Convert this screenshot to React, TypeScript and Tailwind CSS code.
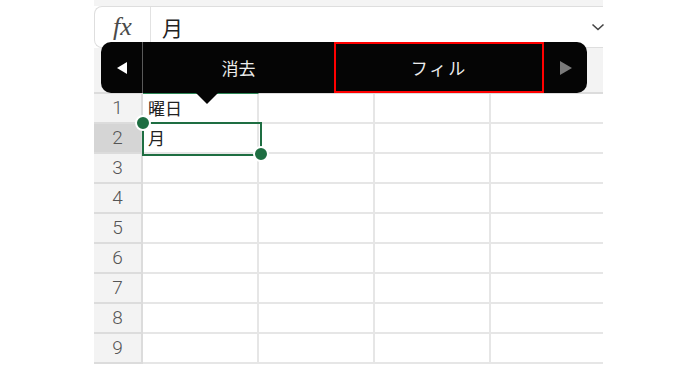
import React from "react";

const rows = [1, 2, 3, 4, 5, 6, 7, 8, 9];

export default function App() {
  return (
    <div
      className="relative w-[698px] h-[365px] bg-white overflow-hidden"
      style={{ fontFamily: '"Noto Sans", "Noto Sans CJK JP", sans-serif' }}
    >
      <div className="ml-[94px] w-[509px] flex flex-col">
        <div className="h-[6px] bg-[#f4f4f4]" />
        {/* formula bar */}
        <div className="h-[42px] flex items-center bg-white border border-r-0 border-[#dedede] rounded-l-[8px]">
          <div className="w-[56px] h-full flex items-center justify-center border-r border-[#e2e2e2]">
            <span
              className="italic text-[26px] text-[#4a4a4a] leading-none"
              style={{ fontFamily: '"Liberation Serif", "DejaVu Serif", serif' }}
            >
              fx
            </span>
          </div>
          <div className="flex-1 pl-[11px] text-[21px] text-[#222] leading-none" style={{ fontFamily: '"Noto Sans CJK JP", sans-serif' }}>
            月
          </div>
          <svg width="14" height="10" viewBox="0 0 14 10" className="mr-[-2px]">
            <polyline points="1.5,2.5 7,7.5 12.5,2.5" fill="none" stroke="#444" strokeWidth="1.6" />
          </svg>
        </div>
        {/* column header */}
        <div className="h-[46px] flex bg-[#f3f3f3]">
          <div className="w-[49px] border-r-2 border-b-2 border-[#dcdcdc]" />
          <div className="w-[116px] border-r-2 border-[#dcdcdc] border-b-2 border-b-[#2d8656]" />
          <div className="w-[116px] border-r-2 border-b-2 border-[#dcdcdc]" />
          <div className="w-[116px] border-r-2 border-b-2 border-[#dcdcdc]" />
          <div className="flex-1 border-b-2 border-[#dcdcdc]" />
        </div>
        {rows.map((r) => (
          <div key={r} className="h-[30px] flex">
            <div
              className={`w-[49px] border-r-2 border-b-2 border-[#dcdcdc] flex items-center justify-center text-[19px] font-light text-[#555] ${
                r === 2 ? "bg-[#d5d5d5]" : "bg-[#f3f3f3]"
              }`}
              style={{ fontFamily: 'Roboto, "Noto Sans", sans-serif' }}
            >
              {r}
            </div>
            <div className="w-[116px] border-r-2 border-b-2 border-[#e6e6e6] flex items-center pl-[5px] text-[17px] text-[#222]" style={{ fontFamily: '"Noto Sans CJK JP", sans-serif' }}>
              {r === 1 ? "曜日" : r === 2 ? "月" : ""}
            </div>
            <div className="w-[116px] border-r-2 border-b-2 border-[#e6e6e6]" />
            <div className="w-[116px] border-r-2 border-b-2 border-[#e6e6e6]" />
            <div className="flex-1 border-b-2 border-[#e6e6e6]" />
          </div>
        ))}
      </div>

      {/* selection */}
      <div className="absolute left-[142px] top-[122px] w-[120px] h-[34px] border-2 border-[#1e6e42]" />
      <div className="absolute left-[135px] top-[115px] w-[16px] h-[16px] rounded-full bg-[#1e6e42] border-2 border-white" />
      <div className="absolute left-[253px] top-[146px] w-[16px] h-[16px] rounded-full bg-[#1e6e42] border-2 border-white" />

      {/* popup menu */}
      <div className="absolute left-[101px] top-[42px] w-[486px] h-[51px] bg-[#050505] rounded-[10px] flex text-[#ececec] text-[17px]" style={{ fontFamily: '"Noto Sans CJK JP", sans-serif' }}>
        <div className="w-[42px] flex items-center justify-center border-r border-[#5a5a5a]">
          <svg width="12" height="14" viewBox="0 0 12 14">
            <polygon points="11,1 11,13 1,7" fill="#ffffff" />
          </svg>
        </div>
        <div className="w-[191px] flex items-center justify-center">消去</div>
        <div className="w-[210px] flex items-center justify-center border-2 border-[#ff0000] tracking-[2px]">フィル</div>
        <div className="flex-1 flex items-center justify-center">
          <svg width="14" height="16" viewBox="0 0 14 16">
            <polygon points="1,1 1,15 13,8" fill="#7a7a7a" />
          </svg>
        </div>
        <div className="absolute left-[94px] top-[50px] w-0 h-0 border-l-[12px] border-r-[12px] border-t-[12px] border-l-transparent border-r-transparent border-t-[#050505]" />
      </div>
    </div>
  );
}
